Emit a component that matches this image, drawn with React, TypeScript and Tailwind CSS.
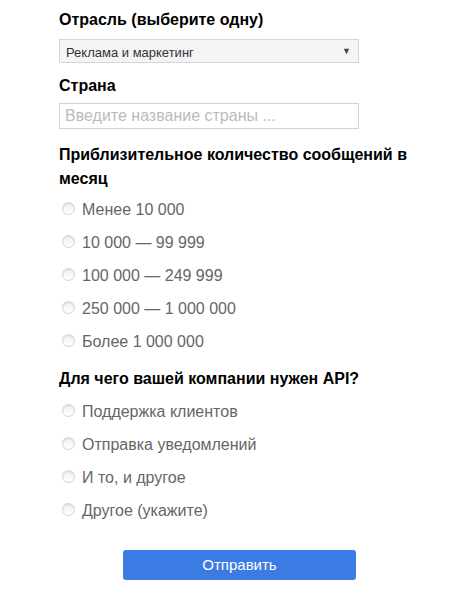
import React, { useState } from 'react';

const volumes = ['Менее 10 000', '10 000 — 99 999', '100 000 — 249 999', '250 000 — 1 000 000', 'Более 1 000 000'];
const purposes = ['Поддержка клиентов', 'Отправка уведомлений', 'И то, и другое', 'Другое (укажите)'];

function Radio({ label, name }: { label: string; name: string }) {
  return (
    <label className="flex h-[33px] items-center cursor-pointer">
      <span className="ml-[3px] mr-[7px] mb-[3px] h-[13px] w-[13px] rounded-full border border-[#d4d4d4] bg-gradient-to-b from-[#eeeeee] to-white shadow-[inset_0_1px_1px_rgba(0,0,0,0.08)]" />
      <input type="radio" name={name} className="hidden" />
      <span className="text-[16px] text-[#666]">{label}</span>
    </label>
  );
}

export default function App() {
  const [industry, setIndustry] = useState('Реклама и маркетинг');

  return (
    <div className="min-h-screen bg-white font-['Liberation_Sans',Arial,sans-serif]">
      <form className="ml-[59px] w-[300px] pt-[8px] pb-[20px]" onSubmit={(e) => e.preventDefault()}>
        <h3 className="text-[16px] leading-[24px] font-bold text-black">Отрасль (выберите одну)</h3>
        <div className="relative mt-[7px] h-[24px] w-[300px] border border-[#d5d5d5] bg-[#f4f4f6]">
          <select
            value={industry}
            onChange={(e) => setIndustry(e.target.value)}
            className="h-full w-full appearance-none bg-transparent pl-[6px] text-[13px] text-[#333] outline-none"
          >
            <option>Реклама и маркетинг</option>
            <option>Розничная торговля</option>
            <option>Финансы</option>
          </select>
          <span className="pointer-events-none absolute right-[7px] top-[7px] text-[9px] leading-none text-[#444]">▼</span>
        </div>

        <h3 className="mt-[11px] text-[16px] leading-[24px] font-bold text-black">Страна</h3>
        <input
          placeholder="Введите название страны ..."
          className="mt-[5px] h-[26px] w-[300px] border border-[#cfd3dc] px-[5px] text-[16px] text-[#333] outline-none placeholder:text-[#bbb]"
        />

        <h3 className="mt-[14px] w-[360px] text-[16px] leading-[24px] font-bold text-black">
          Приблизительное количество сообщений в месяц
        </h3>
        <div className="mt-[2px]">
          {volumes.map((v) => (
            <Radio key={v} label={v} name="volume" />
          ))}
        </div>

        <h3 className="mt-[9px] text-[16px] leading-[24px] font-bold text-black whitespace-nowrap">Для чего вашей компании нужен API?</h3>
        <div className="mt-[4px]">
          {purposes.map((p) => (
            <Radio key={p} label={p} name="purpose" />
          ))}
        </div>

        <div className="mt-[23px] flex justify-end pr-[3px]">
          <button
            type="submit"
            className="h-[30px] w-[233px] rounded-[3px] bg-[#3b7be3] text-[15px] text-white"
          >
            Отправить
          </button>
        </div>
      </form>
    </div>
  );
}
